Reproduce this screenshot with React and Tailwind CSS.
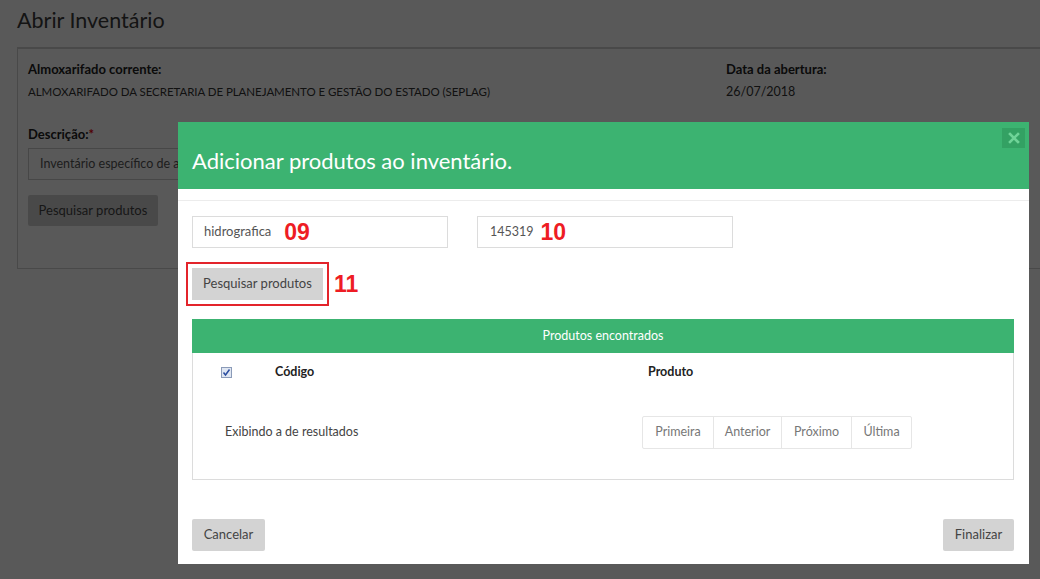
import React from "react";

function CloseIcon() {
  return (
    <svg width="12" height="12" viewBox="0 0 12 12">
      <path d="M2 2 L10 10 M10 2 L2 10" stroke="#6fd398" strokeWidth="2.6" strokeLinecap="square" />
    </svg>
  );
}

export default function App() {
  return (
    <div className="relative w-[1040px] h-[579px] overflow-hidden bg-white font-['Lato','Open_Sans',sans-serif] text-[#333]">
      {/* underlying page */}
      <div className="pt-[7px]">
        <h1 className="px-[17px] text-[21.5px] leading-[26px] text-[#3a3a3a]">Abrir Inventário</h1>
        <div className="ml-[17px] mt-[14px] h-[222px] border-t-[2px] border-l border-b border-[#d2d2d2] bg-white pl-[10px] pt-[12px]">
          <div className="flex">
            <div className="w-[698px]">
              <div className="text-[13px] font-bold leading-[16px] text-[#222]">Almoxarifado corrente:</div>
              <div className="mt-[7px] text-[11.5px] leading-[16px] text-[#333] tracking-[-0.05px]">
                ALMOXARIFADO DA SECRETARIA DE PLANEJAMENTO E GESTÃO DO ESTADO (SEPLAG)
              </div>
            </div>
            <div>
              <div className="text-[13px] font-bold leading-[16px] text-[#222]">Data da abertura:</div>
              <div className="mt-[7px] text-[12.5px] leading-[16px] text-[#333]">26/07/2018</div>
            </div>
          </div>
          <div className="mt-[26px] text-[13px] font-bold leading-[16px] text-[#222]">
            Descrição:<span className="text-red-600">*</span>
          </div>
          <div className="mt-[6px] flex h-[32px] w-[400px] items-center border border-[#ccc] pl-[11px] text-[12.5px] text-[#555]">
            Inventário específico de a
          </div>
          <div className="mt-[15px] flex h-[31px] w-[130px] items-center justify-center rounded-[2px] bg-[#d2d2d2] text-[13px] text-[#444]">
            Pesquisar produtos
          </div>
        </div>
      </div>

      {/* backdrop */}
      <div className="absolute inset-0 bg-black/65"></div>

      {/* modal */}
      <div className="absolute left-[178px] top-[122px] flex h-[442px] w-[851px] flex-col bg-white">
        <div className="relative h-[67px] bg-[#3cb371] px-[14px] pt-[26px]">
          <div className="text-[22px] leading-[26px] text-white">Adicionar produtos ao inventário.</div>
          <div className="absolute right-[4px] top-[6px] flex h-[20px] w-[23px] items-center justify-center bg-[#33a163]">
            <CloseIcon />
          </div>
        </div>
        <div className="h-[12px] border-b border-[#ececec]"></div>

        <div className="flex flex-1 flex-col pl-[14px] pr-[15px] pt-[15px]">
          <div className="flex gap-[29px]">
            <div className="flex h-[32px] w-[256px] items-center border border-[#dcdcdc] pl-[11px]">
              <span className="text-[13px] text-[#555]">hidrografica</span>
              <span className="ml-[13px] font-['Liberation_Sans',sans-serif] text-[23px] font-bold leading-none text-[#ee1c24]">09</span>
            </div>
            <div className="flex h-[32px] w-[256px] items-center border border-[#dcdcdc] pl-[12px]">
              <span className="text-[12.5px] text-[#555]">145319</span>
              <span className="ml-[7px] font-['Liberation_Sans',sans-serif] text-[23px] font-bold leading-none text-[#ee1c24]">10</span>
            </div>
          </div>

          <div className="mt-[14px] flex items-center">
            <div className="-ml-[6px] border-2 border-[#e3242b] px-[4px] py-[4px]">
              <div className="flex h-[32px] w-[131px] items-center justify-center bg-[#d3d3d3] text-[13px] text-[#444]">
                Pesquisar produtos
              </div>
            </div>
            <span className="ml-[5px] font-['Liberation_Sans',sans-serif] text-[23px] font-bold leading-none text-[#ee1c24]">11</span>
          </div>

          <div className="mt-[13px] h-[161px] border border-[#dcdcdc]">
            <div className="-mx-px -mt-px flex h-[34px] items-center justify-center bg-[#3cb371] text-[12.5px] text-white">
              Produtos encontrados
            </div>
            <div className="flex h-[39px] items-center">
              <div className="ml-[28px] flex h-[11px] w-[11px] items-center justify-center border border-[#8b9bb8] bg-[#dfe6f2]">
                <svg width="9" height="9" viewBox="0 0 9 9">
                  <path d="M1.5 4.5 L3.5 7 L7.5 1.5" stroke="#2a4da0" strokeWidth="1.5" fill="none" />
                </svg>
              </div>
              <div className="ml-[43px] w-[373px] text-[12.5px] font-bold text-[#222]">Código</div>
              <div className="text-[12.5px] font-bold text-[#222]">Produto</div>
            </div>
            <div className="mt-[24px] flex items-center">
              <div className="ml-[32px] w-[417px] text-[12.5px] text-[#444]">Exibindo a de resultados</div>
              <div className="flex h-[33px] items-stretch rounded-[2px] border border-[#e6e6e6] text-[12.5px] text-[#777]">
                <div className="flex w-[70px] items-center justify-center">Primeira</div>
                <div className="flex w-[68px] items-center justify-center border-l border-[#e6e6e6]">Anterior</div>
                <div className="flex w-[70px] items-center justify-center border-l border-[#e6e6e6]">Próximo</div>
                <div className="flex w-[60px] items-center justify-center border-l border-[#e6e6e6]">Última</div>
              </div>
            </div>
          </div>

          <div className="mt-[39px] flex justify-between">
            <div className="flex h-[32px] w-[73px] items-center justify-center rounded-[2px] bg-[#d3d3d3] text-[13px] text-[#444]">
              Cancelar
            </div>
            <div className="flex h-[32px] w-[71px] items-center justify-center rounded-[2px] bg-[#d3d3d3] text-[13px] text-[#444]">
              Finalizar
            </div>
          </div>
        </div>
      </div>
    </div>
  );
}
